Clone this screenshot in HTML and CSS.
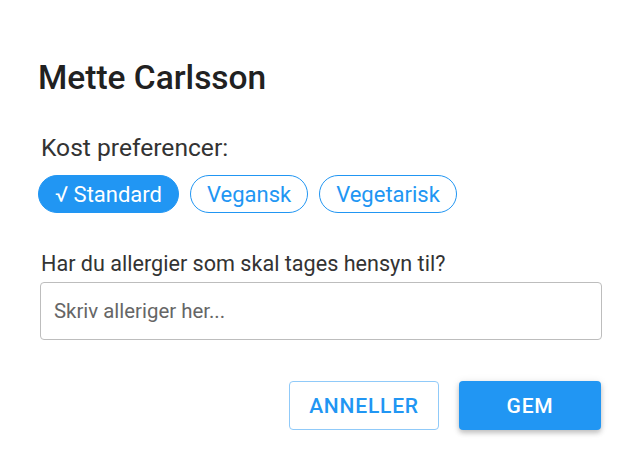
FILE: index.html
```html
<!DOCTYPE html>
<html lang="da">
<head>
  <meta charset="UTF-8">
  <title>Mette Carlsson – Kost</title>
  <meta name="viewport" content="width=device-width, initial-scale=1.0">
  <link rel="stylesheet" href="styles.css">
</head>
<body>
  <div class="dialog">
    <h1 class="dialog-title">Mette Carlsson</h1>

    <div class="section">
      <p class="label label-large">Kost preferencer:</p>
      <div class="chip-row">
        <button class="chip active">√ Standard</button>
        <button class="chip">Vegansk</button>
        <button class="chip">Vegetarisk</button>
      </div>
    </div>

    <div class="section allergies">
      <p class="label">Har du allergier som skal tages hensyn til?</p>
      <input class="text-input" type="text" placeholder="Skriv alleriger her...">
    </div>

    <div class="actions">
      <button class="btn btn-outline">ANNELLER</button>
      <button class="btn btn-primary">GEM</button>
    </div>
  </div>
</body>
</html>
```

FILE: styles.css
```css
* {
  box-sizing: border-box;
  font-family: Roboto, 'Liberation Sans', sans-serif;
}

body {
  margin: 0;
  background: #fff;
}

.dialog {
  width: 640px;
  height: 465px;
  background: white;
  border-radius: 12px;
  padding: 58px 38px 0 38px;
  color: #212121;
}

.dialog-title {
  margin: 0;
  font-size: 33.5px;
  font-weight: 500;
  line-height: 40px;
}

.section {
  margin-top: 35px;
}

.label {
  margin: 0 0 0 3px;
  font-size: 21.6px;
  color: #333;
  line-height: 26px;
}

.label-large {
  font-size: 24.6px;
  line-height: 30px;
}

.chip-row {
  display: flex;
  gap: 11px;
  margin-top: 12px;
}

.chip {
  height: 38px;
  padding: 0 16px;
  border: 1.5px solid #2196f3;
  border-radius: 19px;
  background: white;
  color: #2196f3;
  font-size: 22px;
  cursor: pointer;
}

.chip.active {
  background: #2196f3;
  color: white;
}

.allergies {
  margin-top: 38px;
}

.text-input {
  display: block;
  width: 562px;
  height: 58px;
  margin: 5px 0 0 2px;
  padding: 0 13px;
  border: 1.5px solid #bdbdbd;
  border-radius: 4px;
  font-size: 20.4px;
  color: #333;
}

.text-input::placeholder {
  color: #666;
}

.actions {
  display: flex;
  justify-content: flex-end;
  gap: 20px;
  margin-top: 41px;
  padding-right: 1px;
}

.btn {
  height: 49px;
  border-radius: 4px;
  font-size: 21px;
  font-weight: 500;
  letter-spacing: 0.8px;
  cursor: pointer;
}

.btn-outline {
  width: 150px;
  background: white;
  border: 1.5px solid #90caf9;
  color: #2196f3;
}

.btn-primary {
  width: 142px;
  background: #2196f3;
  border: none;
  color: white;
  box-shadow: 0 3px 5px rgba(0, 0, 0, 0.2), 0 1px 8px rgba(0, 0, 0, 0.1);
}
```
